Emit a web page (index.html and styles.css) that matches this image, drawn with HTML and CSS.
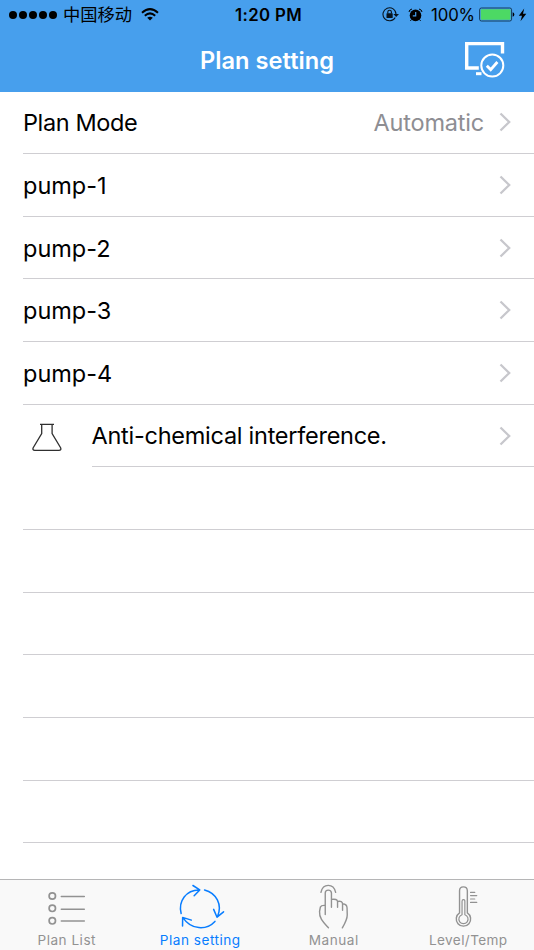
FILE: index.html
```
<!DOCTYPE html>
<html lang="en">
<head>
<meta charset="utf-8">
<title>Plan setting</title>
<link rel="stylesheet" href="styles.css">
</head>
<body>
<div class="app">
  <header class="header">
    <div class="status">
      <div class="status-left">
        <span class="signal"><i></i><i></i><i></i><i></i><i></i></span>
        <span class="carrier">中国移动</span>
        <svg class="wifi" width="18" height="13" viewBox="0 0 18 13" fill="none" stroke="#000" stroke-width="2"><path d="M1 4.7Q9-2.5 17 4.7M3.8 7.7Q9 3.1 14.2 7.7"/><path d="M9 12.6L6.2 9.8Q9 7.6 11.8 9.8Z" fill="#000" stroke="none"/></svg>
      </div>
      <span class="time">1:20 PM</span>
      <div class="status-right">
        <svg class="lock" width="18" height="15" viewBox="0 0 18 15" fill="none" stroke="#08131d" stroke-width="1.1"><path d="M13.2 10.4A6.5 6.5 0 1 1 14 7.2"/><path d="M11.4 6.9H17L14.2 10Z" fill="#08131d" stroke="none"/><rect x="4.5" y="6.3" width="6.2" height="4.6" rx=".5" fill="#08131d" stroke="none"/><path d="M5.8 6.5V5a1.8 1.8 0 0 1 3.6 0v1.5"/></svg>
        <svg class="alarm" width="15" height="14" viewBox="0 0 15 14"><circle cx="7.5" cy="7.4" r="5.8"/><path d="M3.4 11.6L2.4 12.9M11.6 11.6l1 1.3M1 4Q1.2 1.5 4 1M14 4Q13.8 1.5 11 1" fill="none" stroke="#000" stroke-width="1"/><path d="M7.7 4v3.8H4.8" fill="none" stroke="#479fed" stroke-width="1.2"/></svg>
        <span class="percent">100%</span>
        <svg class="battery" width="36" height="15" viewBox="0 0 36 15"><rect x=".6" y="1" width="32" height="13" rx="1.8" fill="#479fed" stroke="#153a5b"/><rect x="1.8" y="2.2" width="29.6" height="10.6" rx=".8" fill="#4cd964"/><path d="M33.7 5.3Q35.3 5.5 35.3 7.5T33.7 9.7Z"/></svg>
        <svg class="bolt" width="9" height="14" viewBox="0 0 9 14"><path d="M6.2.6L.8 7.8H4L2.5 13.2 8.3 5.8H5Z"/></svg>
      </div>
    </div>
    <div class="navbar">
      <h1 class="title">Plan setting</h1>
      <svg class="nav-action" width="40" height="36" viewBox="0 0 40 36" fill="none" stroke="#fff"><path d="M13.8 26H1.7V1.6H37.5V11.5" stroke-width="3.4"/><path d="M11 31.7H16.5" stroke-width="3"/><circle cx="27.3" cy="23.6" r="11" stroke-width="2"/><path d="M21.8 23.7L25.7 27.6 32.4 20" stroke-width="2.8"/></svg>
    </div>
  </header>
  <main class="list">
    <div class="row"><span class="label mode">Plan Mode</span><span class="value">Automatic</span><svg class="chev" width="14" height="20" viewBox="0 0 14 20"><path d="M1.5 1.5L10.2 10 1.5 18.5"/></svg></div>
    <div class="row"><span class="label pump">pump-1</span><svg class="chev" width="14" height="20" viewBox="0 0 14 20"><path d="M1.5 1.5L10.2 10 1.5 18.5"/></svg></div>
    <div class="row"><span class="label pump">pump-2</span><svg class="chev" width="14" height="20" viewBox="0 0 14 20"><path d="M1.5 1.5L10.2 10 1.5 18.5"/></svg></div>
    <div class="row"><span class="label pump">pump-3</span><svg class="chev" width="14" height="20" viewBox="0 0 14 20"><path d="M1.5 1.5L10.2 10 1.5 18.5"/></svg></div>
    <div class="row"><span class="label pump">pump-4</span><svg class="chev" width="14" height="20" viewBox="0 0 14 20"><path d="M1.5 1.5L10.2 10 1.5 18.5"/></svg></div>
    <div class="icon-row">
      <svg class="flask" width="30" height="29" viewBox="0 0 30 29" fill="none" stroke="#303030" stroke-width="1.3"><path d="M8 1.3H22M9.7 1.5V10.5L1.2 24.7Q.2 27.3 2.8 27.3H27Q29.6 27.3 28.6 24.7L20.1 10.5V1.5"/></svg>
      <div class="row"><span class="label anti">Anti-chemical interference.</span><svg class="chev" width="14" height="20" viewBox="0 0 14 20"><path d="M1.5 1.5L10.2 10 1.5 18.5"/></svg></div>
    </div>
    <div class="row"></div><div class="row"></div><div class="row"></div>
    <div class="row"></div><div class="row"></div><div class="row"></div>
  </main>
  <nav class="tabs">
    <div class="tab">
      <svg width="134" height="52" viewBox="0 880 134 52"><g stroke-width="1.7"><circle cx="52.3" cy="896" r="3.2"/><circle cx="52.3" cy="908.3" r="3.2"/><circle cx="52.3" cy="920.8" r="3.2"/><path d="M61.3 896.6H84.3M61.3 909.2H84.3M61.3 921H84.3" stroke-width="1.5"/></g></svg>
      <span class="tab-name">Plan List</span>
    </div>
    <div class="tab active">
      <svg width="134" height="52" viewBox="133.25 879.8 134 52"><g stroke-width="1.5"><path d="M181.4 913.3C178.2 901 186.5 889.5 199.8 889.8M193.2 885.3L200 889.7 194.4 895.6"/><path d="M204.8 889.8C216.5 892.8 223 904.4 217.7 916.6M213.9 909.2L217.3 917 223.8 911.6"/><path d="M215.2 921.2C206.5 930.5 191.5 929.6 183.3 917.6M191.6 919.9L182.9 917.2 182.8 925.8"/></g></svg>
      <span class="tab-name">Plan setting</span>
    </div>
    <div class="tab">
      <svg width="134" height="52" viewBox="266.75 880 134 52"><g stroke-width="1.4"><path d="M320.7 892.3C322.8 883.1 333.2 883.1 335.4 892.3"/><path d="M328.2 927.8C323.5 922.6 318.8 918.6 319.3 911.5L320.1 907.1Q321.1 905 325 905.4M325 914.5V893Q325 890.1 328 890.1T331.2 893V907.3M331.2 899.4Q337 898.5 337.3 901.5V907.2M337.3 901.5Q342.3 900.6 342.3 904V910.3M342.3 903.7Q346.6 903.9 346.8 907.7L347 915Q347 919.5 342.1 927.8"/></g></svg>
      <span class="tab-name">Manual</span>
    </div>
    <div class="tab">
      <svg width="134" height="52" viewBox="400.25 879.8 134 52"><g stroke-width="1.4"><path d="M459.8 912.7V890.5Q459.8 886.7 463.6 886.7T467.6 890.5V912.7A7.2 7.2 0 1 1 459.8 912.7Z"/><path d="M462.3 914.5V901Q462.3 899.4 463.7 899.4T465.1 901V914.5A4.6 4.6 0 1 1 462.3 914.5Z" stroke-width="1.2"/><path d="M470.8 892.2H475M470.8 895.4H477M470.8 898.8H475M470.8 902.2H477" stroke-width="1.2"/></g></svg>
      <span class="tab-name wide">Level/Temp</span>
    </div>
  </nav>
</div>
</body>
</html>
```
FILE: styles.css
```
* { box-sizing: border-box; }
body { margin: 0; background: #fff; font-family: Inter, "Noto Sans CJK SC", sans-serif; }
svg { display: block; flex: none; }
.app { width: 534px; height: 950px; overflow: hidden; display: flex; flex-direction: column; }
.header { height: 91.5px; flex: none; background: #479fed; }
.status { height: 29px; display: grid; grid-template-columns: 200px 1fr 200px; align-items: center; white-space: nowrap; font-size: 17px; line-height: 28px; }
.status-left, .status-right { display: flex; align-items: center; height: 29px; }
.status-left { padding-left: 9px; }
.status-right { justify-content: flex-end; padding-right: 7px; }
.signal { display: flex; gap: 2px; }
.signal i { width: 8px; height: 8px; border-radius: 50%; background: #000; }
.carrier { margin: -1px 0 0 6px; font-family: "Noto Sans CJK SC", sans-serif; font-size: 17.3px; }
.wifi { margin: -1px 0 0 9px; }
.time { text-align: center; font-weight: 600; font-size: 16.8px; letter-spacing: .35px; padding: 1px 0 0 3px; }
.alarm { margin-left: 8px; }
.percent { margin-left: 8px; padding-top: 1px; font-size: 16.8px; letter-spacing: -.1px; }
.battery { margin: 0 0 0 4px; }
.bolt { margin-left: 3px; }
.navbar { height: 62px; display: grid; grid-template-columns: 1fr 334px 1fr; align-items: center; }
.title { grid-column: 2; margin: 2px 0 0; color: #fff; text-align: center; font-size: 23.6px; font-weight: 600; line-height: 30px; letter-spacing: .05px; white-space: nowrap; }
.nav-action { margin: -1px 0 0 31px; }
.list { flex: 1; min-height: 0; overflow: hidden; padding-left: 23px; }
.row { height: 62.65px; display: flex; align-items: center; flex: 1; border-bottom: 1px solid #cfced2; padding-right: 21px; }
.label { margin-top: 2px; font-size: 23.5px; line-height: 30px; letter-spacing: -.2px; white-space: nowrap; color: #000; }
.mode { letter-spacing: -.4px; }
.pump { letter-spacing: 0; }
.anti { margin-top: 1px; letter-spacing: -.26px; }
.value { margin: 1px 0 0 auto; color: #8e8e93; font-size: 23.5px; letter-spacing: -.2px; }
.chev { margin-left: auto; fill: none; stroke: #c7c7cc; stroke-width: 2.3; }
.value + .chev { margin-left: 15px; }
.icon-row { display: flex; align-items: center; height: 62.65px; }
.flask { margin: 2px 30px 0 8.5px; }
.tabs { height: 71px; flex: none; display: grid; grid-template-columns: repeat(4, 1fr); border-top: 1px solid #b5b5b6; background: #f9f9f9; }
.tab { min-width: 0; display: flex; flex-direction: column; align-items: center; color: #929292; font-size: 13.6px; line-height: 16px; white-space: nowrap; }
.tab svg { fill: none; stroke: currentColor; stroke-linecap: round; stroke-linejoin: round; }
.tab.active { color: #087dff; }
.tab-name { letter-spacing: .5px; }
.tab-name.wide { letter-spacing: .4px; padding-left: 2px; }
```
